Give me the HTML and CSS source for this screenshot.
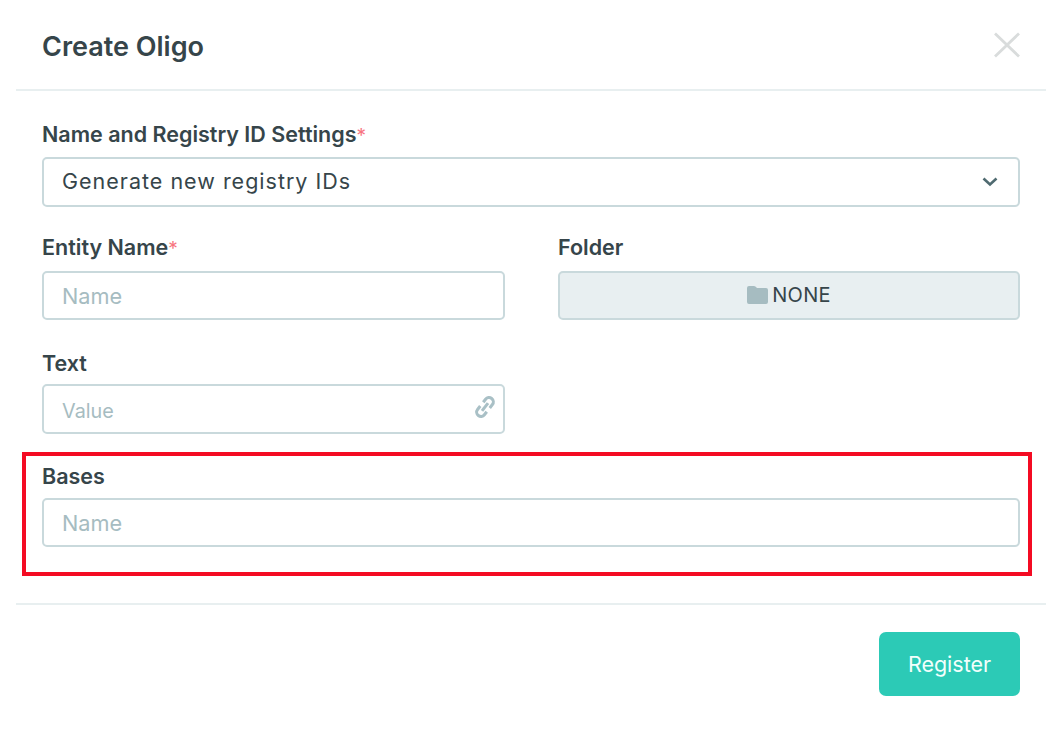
FILE: index.html
```html
<!DOCTYPE html>
<html lang="en">
<head>
<meta charset="utf-8">
<title>Create Oligo</title>
<link rel="stylesheet" href="styles.css">
</head>
<body>
<div class="dialog">
  <header class="head">
    <h1 class="title">Create Oligo</h1>
    <svg class="close" width="28" height="26" viewBox="0 0 28 26" aria-label="Close"><path d="M2 1.500 26 24.500M26 1.500 2 24.500"/></svg>
  </header>
  <div class="form">
    <div class="field">
      <label class="label">Name and Registry ID Settings<span class="req">*</span></label>
      <div class="box select">
        <span class="value">Generate new registry IDs</span>
        <svg class="chev" width="18" height="11" viewBox="0 0 18 11"><path d="M2.500 2.500 9 8.500 15.500 2.500"/></svg>
      </div>
    </div>
    <div class="row">
      <div class="field">
        <label class="label label-high">Entity Name<span class="req">*</span></label>
        <div class="box"><span class="ph">Name</span></div>
      </div>
      <div class="field">
        <label class="label label-high">Folder</label>
        <div class="box folder">
          <svg class="folder-icon" width="21" height="18" viewBox="0 0 21 18"><path d="M0 2Q0 0 2 0H7Q8.500 0 9.500 1.500L10 2H19Q21 2 21 4V16Q21 18 19 18H2Q0 18 0 16Z"/></svg>
          <span class="none">NONE</span>
        </div>
      </div>
    </div>
    <div class="row">
      <div class="field">
        <label class="label label-low">Text</label>
        <div class="box">
          <span class="ph ph-small">Value</span>
          <svg class="link" width="24" height="26" viewBox="0 0 22 24"><g transform="rotate(38 11 12)"><path d="M7 9.500V6a4 4 0 0 1 8 0V10"/><path d="M7 14V18a4 4 0 0 0 8 0V14.500"/><path d="M11 7.500V16.500"/></g></svg>
        </div>
      </div>
      <div class="field"></div>
    </div>
    <div class="mark">
      <label class="label label-low">Bases</label>
      <div class="box"><span class="ph">Name</span></div>
    </div>
  </div>
  <footer class="foot">
    <button class="register" type="button">Register</button>
  </footer>
</div>
</body>
</html>
```
FILE: styles.css
```css
* { box-sizing: border-box; }
html, body { margin: 0; background: #fff; }
body {
  width: 1062px;
  height: 740px;
  overflow: hidden;
  font-family: "Inter", "Lato", "Liberation Sans", sans-serif;
  color: #36454a;
}
.dialog { display: flex; flex-direction: column; }
.head {
  margin: 0 16px;
  height: 91px;
  padding: 3px 25px 0 26px;
  border-bottom: 2px solid #e8eff0;
  display: flex;
  align-items: center;
  justify-content: space-between;
}
.title { margin: 0; font-size: 27px; font-weight: 600; color: #36454a; }
.close { margin-top: -3px; }
.close path { fill: none; stroke: #d9dcdc; stroke-width: 2.800; }
.form {
  padding: 30px 42px 0;
  display: flex;
  flex-direction: column;
  gap: 28px;
}
.row { display: grid; grid-template-columns: 463px 462px; column-gap: 53px; }
.label {
  display: block;
  height: 36px;
  line-height: 27px;
  font-size: 21.500px;
  font-weight: 600;
  color: #36454a;
}
.label-low { padding-top: 1.500px; }
.label-high { line-height: 25px; }
.req { color: #f7747f; font-weight: 400; font-size: 19px; }
.box {
  height: 49.500px;
  border: 2px solid #c9d9dc;
  border-radius: 5px;
  background: #fff;
  display: flex;
  align-items: center;
  justify-content: space-between;
  padding: 0 18px;
}
.value { font-size: 21.500px; letter-spacing: 1px; padding-bottom: 2px; color: #36454a; }
.ph { font-size: 21.700px; padding-top: 2px; color: #a6bcc1; }
.ph-small { font-size: 19.800px; padding-top: 4px; }
.chev path { fill: none; stroke: #4f6a70; stroke-width: 2.600; }
.select { padding-right: 19px; }
.folder {
  background: #e8eff1;
  justify-content: center;
  gap: 4px;
}
.folder-icon path { fill: #a6bcc1; }
.none { font-size: 20px; letter-spacing: 0.300px; color: #36454a; }
.link { margin-right: -12px; margin-top: -4px; }
.link path { fill: none; stroke: #a9c0c6; stroke-width: 2.800; }
.mark {
  margin: -10px -12px 0 -20px;
  height: 124px;
  border: 4px solid #f40b23;
  padding: 6px 8px 0 16px;
}
.foot {
  margin: 27px 16px 0;
  border-top: 2px solid #e8eff0;
  padding: 27px 26px 0;
  display: flex;
  justify-content: flex-end;
}
.register {
  width: 141px;
  height: 64px;
  border: 0;
  border-radius: 7px;
  background: #2ccab6;
  color: #f2fffc;
  font: 400 21.500px "Inter", "Lato", "Liberation Sans", sans-serif;
}
```
